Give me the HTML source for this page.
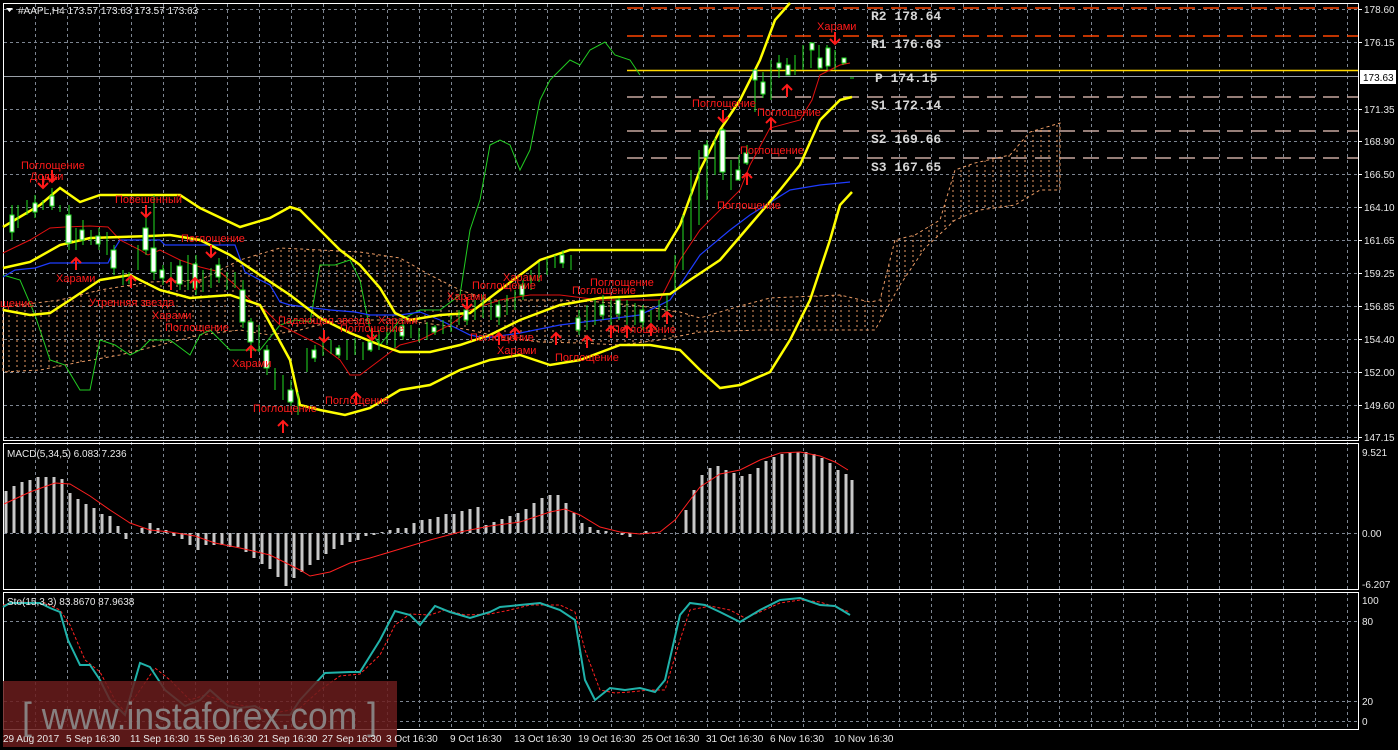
<!DOCTYPE html>
<html><head><meta charset="utf-8"><style>
html,body{margin:0;padding:0;background:#000;}
body{width:1398px;height:750px;overflow:hidden;position:relative;font-family:"Liberation Sans","Noto Sans CJK SC",sans-serif;}
svg{position:absolute;left:0;top:0;}
</style></head><body>
<svg width="1398" height="750" viewBox="0 0 1398 750" xmlns="http://www.w3.org/2000/svg">
<defs>
<pattern id="cl" width="8" height="5" patternUnits="userSpaceOnUse">
<line x1="1" y1="0" x2="1" y2="2" stroke="#e89a64" stroke-width="1"/>
</pattern>
</defs>
<rect width="1398" height="750" fill="#000"/>
<g stroke="#7d8591" stroke-width="1" stroke-dasharray="3,3">
<path d="M35.5 4V729M67.5 4V729M99.5 4V729M131.5 4V729M163.5 4V729M195.5 4V729M227.5 4V729M259.5 4V729M291.5 4V729M323.5 4V729M355.5 4V729M387.5 4V729M419.5 4V729M451.5 4V729M483.5 4V729M515.5 4V729M547.5 4V729M579.5 4V729M611.5 4V729M643.5 4V729M675.5 4V729M707.5 4V729M739.5 4V729M771.5 4V729M803.5 4V729M835.5 4V729M867.5 4V729M899.5 4V729M931.5 4V729M963.5 4V729M995.5 4V729M1027.5 4V729M1059.5 4V729M1091.5 4V729M1123.5 4V729M1155.5 4V729M1187.5 4V729M1219.5 4V729M1251.5 4V729M1283.5 4V729M1315.5 4V729M1347.5 4V729"/>
<path d="M4 9.5H1358M4 42.5H1358M4 109.5H1358M4 141.5H1358M4 174.5H1358M4 207.5H1358M4 240.5H1358M4 273.5H1358M4 306.5H1358M4 339.5H1358M4 372.5H1358M4 405.5H1358M4 437.5H1358M4 533.5H1358M4 621.5H1358M4 701.5H1358M4 721.5H1358"/>
</g>
<g fill="none" stroke="#fff" stroke-width="1">
<rect x="3.5" y="3.5" width="1355" height="437"/>
<rect x="3.5" y="443.5" width="1355" height="146"/>
<rect x="3.5" y="592.5" width="1355" height="137"/>
</g>
<line x1="4" y1="76.5" x2="1358" y2="76.5" stroke="#9aa0a8"/>
<g stroke-width="1.5" stroke-dasharray="16,8">
<line x1="627" y1="8" x2="1358" y2="8" stroke="#ff4500"/>
<line x1="627" y1="36" x2="1358" y2="36" stroke="#ff4500"/>
<line x1="627" y1="97" x2="1358" y2="97" stroke="#c8a8a0"/>
<line x1="627" y1="131" x2="1358" y2="131" stroke="#c8a8a0"/>
<line x1="627" y1="158" x2="1358" y2="158" stroke="#c8a8a0"/>
</g>
<line x1="627" y1="70.5" x2="1358" y2="70.5" stroke="#ffd700" stroke-width="1.5"/>
<g font-family="Liberation Mono,monospace" font-weight="bold" font-size="13" fill="#d8d8d8">
<text x="871" y="20">R2 178.64</text>
<text x="871" y="48">R1 176.63</text>
<text x="875" y="82">P 174.15</text>
<text x="871" y="109">S1 172.14</text>
<text x="871" y="143">S2 169.66</text>
<text x="871" y="171">S3 167.65</text>
</g>
<g stroke="#e89a64" stroke-width="1" stroke-dasharray="3,3" fill="url(#cl)">
<polygon points="3,307 60,300 100,290 150,282 200,280 240,260 280,248 320,250 360,252 400,258 430,275 460,290 490,300 520,300 560,300 600,302 640,306 680,312 700,318 740,306 770,298 840,295 870,302 880,300 895,240 915,235 940,220 955,170 975,163 1010,155 1030,132 1060,123 1060,190 1040,190 1015,205 980,210 955,220 925,248 900,285 875,330 840,330 760,330 700,332 660,340 620,345 580,343 540,342 500,337 470,330 440,325 400,320 360,320 330,322 300,330 270,335 240,330 200,335 160,345 120,355 80,362 40,370 3,372"/>
</g>
<polyline fill="none" stroke="#22cc22" stroke-width="1" points="3,275 20,280 35,315 50,360 65,365 80,390 90,390 100,340 115,345 130,355 140,350 150,340 170,340 190,355 200,335 210,330 230,350 260,350 280,325 295,320 310,322 320,265 335,265 350,260 360,280 370,330 380,345 400,320 420,310 440,310 460,295 470,230 480,200 490,145 500,140 510,145 520,170 530,150 540,100 550,80 560,70 570,60 580,65 590,50 605,42 615,55 630,60 640,75"/>
<polyline fill="none" stroke="#1e3cff" stroke-width="1.2" points="3,277 15,270 35,268 50,263 108,263 115,248 120,240 160,240 165,245 235,245 245,272 260,280 270,285 280,302 290,305 330,310 355,312 370,315 400,315 420,312 440,320 470,335 485,338 520,333 560,325 600,320 640,315 670,300 700,255 730,230 750,215 790,190 820,185 850,182"/>
<polyline fill="none" stroke="#e01010" stroke-width="1" points="3,253 30,240 50,228 65,227 90,226 108,227 120,240 140,250 148,255 160,250 180,260 200,267 220,272 235,285 250,300 265,310 280,325 300,335 320,345 340,360 350,375 360,375 380,360 400,345 420,340 450,325 470,310 500,300 530,295 560,295 600,300 640,300 660,300 680,260 700,230 720,210 740,190 750,165 770,128 800,120 812,100 820,75 830,70 840,65 850,63"/>
<g fill="none" stroke="#ffff00" stroke-width="2.5">
<polyline points="3,227 40,205 60,188 80,202 100,195 180,195 200,208 240,227 270,218 290,207 300,210 320,230 340,250 360,265 380,288 395,313 410,320 440,315 470,313 500,290 540,260 570,250 620,250 665,250 680,225 700,170 720,130 740,100 760,60 775,20 790,3"/>
<polyline points="3,268 30,262 60,245 90,238 150,236 170,235 200,240 230,255 260,275 290,295 320,318 350,333 380,345 400,352 430,352 460,345 490,335 520,320 560,305 600,298 640,296 670,294 690,280 720,260 750,225 780,190 800,165 820,120 840,100 852,97"/>
<polyline points="3,310 30,315 50,313 70,300 100,280 130,275 160,290 190,298 230,295 260,305 290,360 300,405 320,410 345,415 370,408 400,390 430,385 460,370 490,360 520,355 550,365 580,360 620,345 650,345 680,350 700,370 720,388 740,385 770,372 790,340 810,300 830,240 840,205 852,192"/>
</g>
<g stroke="#22dd22" stroke-width="1">
<path d="M12 205V240M18 205V228M27 200V215M35 195V218M43 200V210M52 188V210M60 205V212M69 205V250M76 228V250M83 220V245M91 230V245M99 228V250M107 232V255M114 245V275M123 270V285M129 272V284M138 245V270M146 215V255M154 195V280M163 265V285M171 262V283M180 260V290M188 255V290M196 255V295M203 270V292M211 268V288M219 258V283M227 272V290M235 272V288M243 280V328M251 318V348M259 325V352M267 345V375M275 368V390M283 375V400M291 380V410M298 392V415M307 348V372M315 345V362M323 338V356M331 340V354M339 345V358M347 340V360M355 338V355M363 342V360M371 338V352M379 330V350M387 325V345M395 330V348M403 322V340M411 325V338M419 328V342M427 322V340M435 325V335M443 320V334M451 315V332M459 310V325M467 305V325M475 300V320M483 295V318M491 300V320M499 300V325M507 295V315M515 290V310M523 280V300M531 270V290M539 262V282M547 258V275M555 255V268M563 250V268M571 255V270M579 310V335M587 305V330M595 300V325M603 295V320M611 300V325M619 298V320M627 300V330M635 303V325M643 305V330M651 310V325M659 300V320M667 295V312M675 255V290M683 215V270M691 170V240M699 150V225M707 140V200M715 138V175M723 128V180M731 160V190M739 155V180M747 145V165M755 70V112M763 72V98M771 60V100M779 55V78M787 58V75M795 55V75M803 45V70M811 42V68M819 45V70M827 45V70M835 50V70M843 58V65"/>
</g>
<g fill="#fff" stroke="#22dd22" stroke-width="1">
<rect x="10" y="215" width="4" height="17"/><rect x="33" y="203" width="4" height="9"/><rect x="50" y="196" width="4" height="10"/><rect x="66" y="215" width="5" height="28"/><rect x="80" y="230" width="4" height="10"/><rect x="96" y="236" width="4" height="8"/><rect x="111" y="250" width="5" height="18"/><rect x="143" y="228" width="5" height="22"/><rect x="151" y="248" width="5" height="24"/><rect x="160" y="270" width="4" height="8"/><rect x="177" y="266" width="5" height="18"/><rect x="193" y="264" width="4" height="24"/><rect x="216" y="265" width="4" height="12"/><rect x="240" y="290" width="5" height="32"/><rect x="248" y="322" width="5" height="20"/><rect x="264" y="350" width="5" height="18"/><rect x="288" y="390" width="5" height="12"/><rect x="312" y="350" width="4" height="8"/><rect x="336" y="348" width="4" height="7"/><rect x="368" y="342" width="4" height="8"/><rect x="400" y="326" width="4" height="10"/><rect x="432" y="327" width="4" height="5"/><rect x="464" y="310" width="4" height="10"/><rect x="496" y="305" width="4" height="12"/><rect x="520" y="285" width="4" height="10"/><rect x="560" y="255" width="4" height="8"/><rect x="576" y="318" width="4" height="12"/><rect x="600" y="305" width="4" height="10"/><rect x="616" y="300" width="4" height="14"/><rect x="640" y="310" width="4" height="12"/><rect x="704" y="145" width="4" height="12"/><rect x="720" y="130" width="5" height="42"/><rect x="736" y="170" width="4" height="10"/><rect x="744" y="153" width="4" height="10"/><rect x="753" y="70" width="4" height="10"/><rect x="761" y="82" width="4" height="12"/><rect x="777" y="63" width="4" height="5"/><rect x="786" y="65" width="4" height="10"/><rect x="810" y="43" width="4" height="7"/><rect x="818" y="58" width="4" height="10"/><rect x="826" y="48" width="4" height="18"/><rect x="842" y="58" width="4" height="5"/>
</g>
<line x1="850" y1="78" x2="854" y2="78" stroke="#22dd22"/>
<g fill="#ff1a1a" font-size="11">
<text x="21" y="169">Поглощение</text><text x="30" y="180">Доджи</text>
<text x="115" y="203">Повешенный</text><text x="181" y="242">Поглощение</text>
<text x="56" y="282">Харами</text><text x="89" y="306">Утренняя звезда</text>
<text x="152" y="319">Харами</text><text x="165" y="331">Поглощение</text>
<text x="0" y="307">щение</text><text x="232" y="367">Харами</text>
<text x="253" y="412">Поглощение</text><text x="278" y="324">Падающая звезда</text>
<text x="340" y="332">Поглощение</text><text x="378" y="324">Харами</text>
<text x="325" y="404">Поглощение</text><text x="447" y="300">Харами</text>
<text x="472" y="289">Поглощение</text><text x="503" y="281">Харами</text>
<text x="470" y="341">Поглощение</text><text x="497" y="354">Харами</text>
<text x="590" y="286">Поглощение</text><text x="572" y="294">Поглощение</text>
<text x="555" y="361">Поглощение</text><text x="612" y="333">Поглощение</text>
<text x="692" y="107">Поглощение</text><text x="757" y="116">Поглощение</text>
<text x="740" y="154">Поглощение</text><text x="717" y="209">Поглощение</text>
<text x="817" y="30">Харами</text>
</g>
<g fill="none" stroke="#ff1a1a" stroke-width="2">
<path d="M43 176v12m-5-5l5 5 5-5M52 170v12m-5-5l5 5 5-5M146 205v12m-5-5l5 5 5-5M211 245v12m-5-5l5 5 5-5M324 330v12m-5-5l5 5 5-5M372 328v12m-5-5l5 5 5-5M723 110v12m-5-5l5 5 5-5M835 32v12m-5-5l5 5 5-5M467 297v12m-5-5l5 5 5-5"/>
<path d="M76 270v-12m-5 5l5-5 5 5M131 288v-12m-5 5l5-5 5 5M171 290v-12m-5 5l5-5 5 5M195 290v-12m-5 5l5-5 5 5M251 358v-12m-5 5l5-5 5 5M283 433v-12m-5 5l5-5 5 5M356 405v-12m-5 5l5-5 5 5M499 345v-12m-5 5l5-5 5 5M515 340v-12m-5 5l5-5 5 5M587 348v-12m-5 5l5-5 5 5M611 338v-12m-5 5l5-5 5 5M627 338v-12m-5 5l5-5 5 5M651 336v-12m-5 5l5-5 5 5M667 324v-12m-5 5l5-5 5 5M747 185v-12m-5 5l5-5 5 5M771 130v-12m-5 5l5-5 5 5M787 97v-12m-5 5l5-5 5 5M556 345v-12m-5 5l5-5 5 5"/>
</g>
<path stroke="#c8c8c8" stroke-width="3" fill="none" d="M6 533V491M14 533V486M22 533V482M30 533V480M38 533V477M46 533V477M54 533V477M62 533V479M70 533V493M78 533V499M86 533V504M94 533V508M102 533V514M110 533V516M118 533V526M126 533V539M134 533V533M142 533V528M150 533V523M158 533V528M166 533V530M174 533V536M182 533V539M190 533V545M198 533V550M206 533V545M214 533V545M222 533V545M230 533V547M238 533V547M246 533V552M254 533V558M262 533V564M270 533V569M278 533V577M286 533V586M294 533V578M302 533V572M310 533V565M318 533V560M326 533V554M334 533V549M342 533V545M350 533V542M358 533V540M366 533V536M374 533V535M382 533V532M390 533V530M398 533V528M406 533V528M414 533V523M422 533V520M430 533V519M438 533V517M446 533V514M454 533V514M462 533V511M470 533V509M478 533V507M486 533V525M494 533V522M502 533V519M510 533V516M518 533V513M526 533V509M534 533V503M542 533V498M550 533V495M558 533V495M566 533V503M574 533V513M582 533V523M590 533V527M598 533V530M606 533V531M614 533V533M622 533V535M630 533V537M638 533V533M646 533V531M654 533V533M662 533V533M670 533V533M678 533V533M686 533V510M694 533V490M702 533V475M710 533V468M718 533V466M726 533V470M734 533V473M742 533V476M750 533V474M758 533V468M766 533V461M774 533V457M782 533V454M790 533V452M798 533V452M806 533V452M814 533V454M822 533V458M830 533V463M838 533V470M846 533V474M852 533V480"/>
<polyline fill="none" stroke="#ff2020" stroke-width="1" points="4,504 30,492 55,483 70,484 90,496 110,510 130,523 150,530 170,532 195,536 215,543 240,548 270,555 300,570 310,576 330,572 350,563 370,558 400,549 430,540 460,532 490,526 520,522 550,512 565,509 580,515 600,527 620,532 640,534 660,532 675,520 690,500 700,487 720,474 740,470 760,460 780,453 800,452 820,456 835,462 848,470"/>
<text x="7" y="457" font-size="10" fill="#e8e8e8">MACD(5,34,5) 6.083 7.236</text>
<polyline fill="none" stroke="#ff2020" stroke-width="1" stroke-dasharray="3,2" points="3,605 20,602 45,603 60,610 70,625 85,660 100,672 115,700 125,712 140,690 155,668 170,680 190,700 205,695 220,700 240,705 260,708 280,712 300,708 320,690 340,676 360,674 380,655 395,625 410,614 430,615 445,610 465,615 490,614 510,610 530,605 560,605 575,612 585,650 600,690 615,693 630,692 650,690 665,690 680,640 690,610 710,606 730,610 745,618 760,612 780,603 800,600 820,602 835,607 850,612"/>
<polyline fill="none" stroke="#20b2aa" stroke-width="2" points="3,607 10,603 40,603 50,608 60,612 68,640 80,665 90,665 100,680 110,700 125,715 140,663 150,667 165,690 185,706 200,700 210,690 228,706 240,708 255,706 270,715 290,715 300,700 325,673 350,672 360,672 380,640 395,611 410,615 420,625 435,606 450,612 470,618 490,612 500,607 520,605 540,603 560,610 575,620 585,680 595,700 610,688 625,690 640,688 655,692 665,680 680,615 690,603 705,605 720,612 740,622 760,610 780,600 800,598 820,605 835,606 850,615"/>
<text x="7" y="605" font-size="10" fill="#e8e8e8">Sto(15,3,3) 83.8670 87.9638</text>
<rect x="3" y="681" width="394" height="66" fill="#6a1c1c" fill-opacity="0.85"/>
<text x="22" y="729" font-size="38" fill="#8c8c8c" fill-opacity="0.9" textLength="355" lengthAdjust="spacingAndGlyphs">[ www.instaforex.com ]</text>
<g font-size="10" fill="#e8e8e8">
<text x="3" y="742">29 Aug 2017</text><text x="66" y="742">5 Sep 16:30</text><text x="130" y="742">11 Sep 16:30</text><text x="194" y="742">15 Sep 16:30</text><text x="258" y="742">21 Sep 16:30</text><text x="322" y="742">27 Sep 16:30</text><text x="386" y="742">3 Oct 16:30</text><text x="450" y="742">9 Oct 16:30</text><text x="514" y="742">13 Oct 16:30</text><text x="578" y="742">19 Oct 16:30</text><text x="642" y="742">25 Oct 16:30</text><text x="706" y="742">31 Oct 16:30</text><text x="770" y="742">6 Nov 16:30</text><text x="834" y="742">10 Nov 16:30</text>
</g>
<g stroke="#fff"><path d="M1358 9.5h4M1358 42.5h4M1358 109.5h4M1358 141.5h4M1358 174.5h4M1358 207.5h4M1358 240.5h4M1358 273.5h4M1358 306.5h4M1358 339.5h4M1358 372.5h4M1358 405.5h4M1358 437.5h4"/></g>
<g font-size="10" fill="#e8e8e8">
<text x="1364" y="13">178.60</text><text x="1364" y="46">176.15</text><text x="1364" y="113">171.35</text><text x="1364" y="145">168.90</text><text x="1364" y="178">166.50</text><text x="1364" y="211">164.10</text><text x="1364" y="244">161.65</text><text x="1364" y="277">159.25</text><text x="1364" y="310">156.85</text><text x="1364" y="343">154.40</text><text x="1364" y="376">152.00</text><text x="1364" y="409">149.60</text><text x="1364" y="441">147.15</text>
<text x="1362" y="456">9.521</text><text x="1362" y="537">0.00</text><text x="1362" y="588">-6.207</text>
<text x="1362" y="604">100</text><text x="1362" y="625">80</text><text x="1362" y="705">20</text><text x="1362" y="725">0</text>
</g>
<rect x="1360" y="70" width="36" height="14" fill="#fff"/>
<text x="1363" y="81" font-size="10" fill="#000">173.63</text>
<path d="M6 8h7l-3.5 4z" fill="#fff"/>
<text x="18" y="14" font-size="10" fill="#e8e8e8">#AAPL,H4  173.57 173.63 173.57 173.63</text>
</svg>
</body></html>
